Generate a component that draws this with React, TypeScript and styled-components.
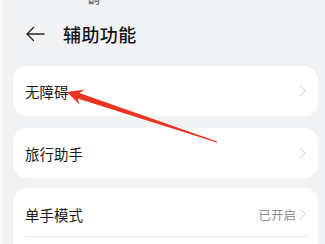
import styled, { createGlobalStyle } from "styled-components";

const GlobalStyle = createGlobalStyle`
  html, body {
    margin: 0;
    padding: 0;
    background: #f1f2f4;
  }
  body {
    font-family: "Noto Sans CJK SC", "Noto Sans", sans-serif;
    color: #1b1b1b;
    overflow: hidden;
  }
`;

const Screen = styled.div`
  position: relative;
  width: 325px;
  height: 244px;
  overflow: hidden;
  background: #f1f2f4;
  border-left: 2px solid #fafafa;
  box-sizing: border-box;
`;

const StatusStrip = styled.div`
  height: 5px;
  overflow: hidden;
  display: flex;
  align-items: flex-end;
  padding-left: 86px;
  font-size: 12px;
  line-height: 12px;
  color: #555;
`;

const Header = styled.div`
  height: 58px;
  display: flex;
  align-items: center;
  padding-left: 23px;
  gap: 18px;
`;

const Title = styled.h1`
  margin: 0;
  font-size: 18px;
  font-weight: 500;
  letter-spacing: 0.4px;
  color: #141414;
`;

const List = styled.div`
  display: flex;
  flex-direction: column;
  padding: 3px 7px 0 11px;
`;

const Card = styled.div<{ $gap?: number }>`
  background: #ffffff;
  border-radius: 14px;
  margin-bottom: ${(p) => p.$gap ?? 12}px;
  overflow: hidden;
`;

const Row = styled.div<{ $h?: number; $top?: number }>`
  height: ${(p) => p.$h ?? 50}px;
  box-sizing: border-box;
  padding: ${(p) => p.$top ?? 0}px 11px 0 12px;
  display: flex;
  align-items: center;
  justify-content: space-between;
`;

const Label = styled.span`
  font-size: 14.5px;
  color: #1b1b1b;
`;

const Trail = styled.div`
  display: flex;
  align-items: center;
  gap: 2px;
`;

const Value = styled.span`
  font-size: 12.5px;
  color: #8f8f8f;
`;

const Divider = styled.div`
  height: 1px;
  margin: 0 10px 0 12px;
  background: #e6e6e6;
`;

const Overlay = styled.svg`
  position: absolute;
  left: 0;
  top: 0;
  pointer-events: none;
`;

function BackIcon() {
  return (
    <svg width="20" height="16" viewBox="0 0 20 16">
      <path
        d="M19 8H2M8.5 1.5L2 8l6.5 6.5"
        fill="none"
        stroke="#222"
        strokeWidth="1.4"
        strokeLinecap="round"
        strokeLinejoin="round"
      />
    </svg>
  );
}

function Chevron() {
  return (
    <svg width="9" height="12" viewBox="0 0 9 12">
      <path
        d="M2 1l5 5-5 5"
        fill="none"
        stroke="#cdcdcd"
        strokeWidth="1"
        strokeLinecap="round"
        strokeLinejoin="round"
      />
    </svg>
  );
}

export default function App() {
  return (
    <>
      <GlobalStyle />
      <Screen>
        <StatusStrip>齣</StatusStrip>
        <Header>
          <BackIcon />
          <Title>辅助功能</Title>
        </Header>
        <List>
          <Card>
            <Row>
              <Label>无障碍</Label>
              <Chevron />
            </Row>
          </Card>
          <Card $gap={10}>
            <Row>
              <Label>旅行助手</Label>
              <Chevron />
            </Row>
          </Card>
          <Card $gap={0}>
            <Row $h={48} $top={4}>
              <Label>单手模式</Label>
              <Trail>
                <Value>已开启</Value>
                <Chevron />
              </Trail>
            </Row>
            <Divider />
            <Row>
              <Label>&nbsp;</Label>
            </Row>
          </Card>
        </List>
        <Overlay width="325" height="244" viewBox="0 0 325 244">
          <path
            d="M65 92 L82.7 89.5 L77.3 93.1 L215.2 141.4 L214.8 142.6 L75.5 98.5 L77.7 104.7 Z"
            fill="#ea3323"
          />
        </Overlay>
      </Screen>
    </>
  );
}
